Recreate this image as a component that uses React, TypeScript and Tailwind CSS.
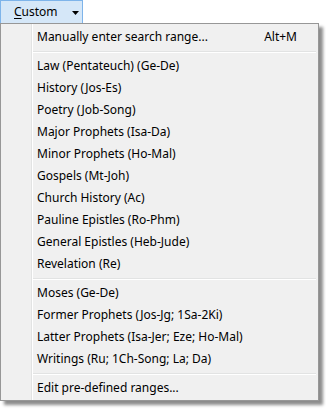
import React from "react";

type Entry = { label: string; shortcut?: string } | "sep";

const entries: Entry[] = [
  { label: "Manually enter search range...", shortcut: "Alt+M" },
  "sep",
  { label: "Law (Pentateuch) (Ge-De)" },
  { label: "History (Jos-Es)" },
  { label: "Poetry (Job-Song)" },
  { label: "Major Prophets (Isa-Da)" },
  { label: "Minor Prophets (Ho-Mal)" },
  { label: "Gospels (Mt-Joh)" },
  { label: "Church History (Ac)" },
  { label: "Pauline Epistles (Ro-Phm)" },
  { label: "General Epistles (Heb-Jude)" },
  { label: "Revelation (Re)" },
  "sep",
  { label: "Moses (Ge-De)" },
  { label: "Former Prophets (Jos-Jg; 1Sa-2Ki)" },
  { label: "Latter Prophets (Isa-Jer; Eze; Ho-Mal)" },
  { label: "Writings (Ru; 1Ch-Song; La; Da)" },
  "sep",
  { label: "Edit pre-defined ranges..." },
];

export default function App() {
  return (
    <div
      className="w-[326px] h-[410px] bg-white text-[12px] text-black"
      style={{ fontFamily: '"Noto Sans", "Segoe UI", sans-serif' }}
    >
      <div className="flex h-[24px] w-[83px] items-center border border-[#7eb4ea] bg-[#d5e7f8] pl-[13px]">
        <span className="leading-none">
          <span className="underline underline-offset-2">C</span>ustom
        </span>
        <svg width="7" height="4" viewBox="0 0 7 4" className="ml-[14px] mt-[1px]">
          <polygon points="0,0 7,0 3.5,4" fill="#000" />
        </svg>
      </div>
      <div className="relative -mt-px w-[319px] border border-[#979797] bg-[#f0f0f0] pt-[2px] pb-[1px] shadow-[4px_4px_3px_rgba(0,0,0,0.45)]">
        <div className="absolute left-[30px] top-0 bottom-0 w-[2px] border-l border-[#e2e3e3] bg-white/0 [border-right:1px_solid_#ffffff]" />
        {entries.map((e, i) =>
          e === "sep" ? (
            <div key={i} className="flex h-[7px] items-center pl-[32px] pr-[2px]">
              <div className="h-[2px] w-full border-t border-[#e2e3e3] border-b border-b-white" />
            </div>
          ) : (
            <div key={i} className="flex h-[22px] items-center pl-[36px] pr-[21px]">
              <span className="flex-1 leading-none">{e.label}</span>
              {e.shortcut && <span className="leading-none">{e.shortcut}</span>}
            </div>
          )
        )}
      </div>
    </div>
  );
}
